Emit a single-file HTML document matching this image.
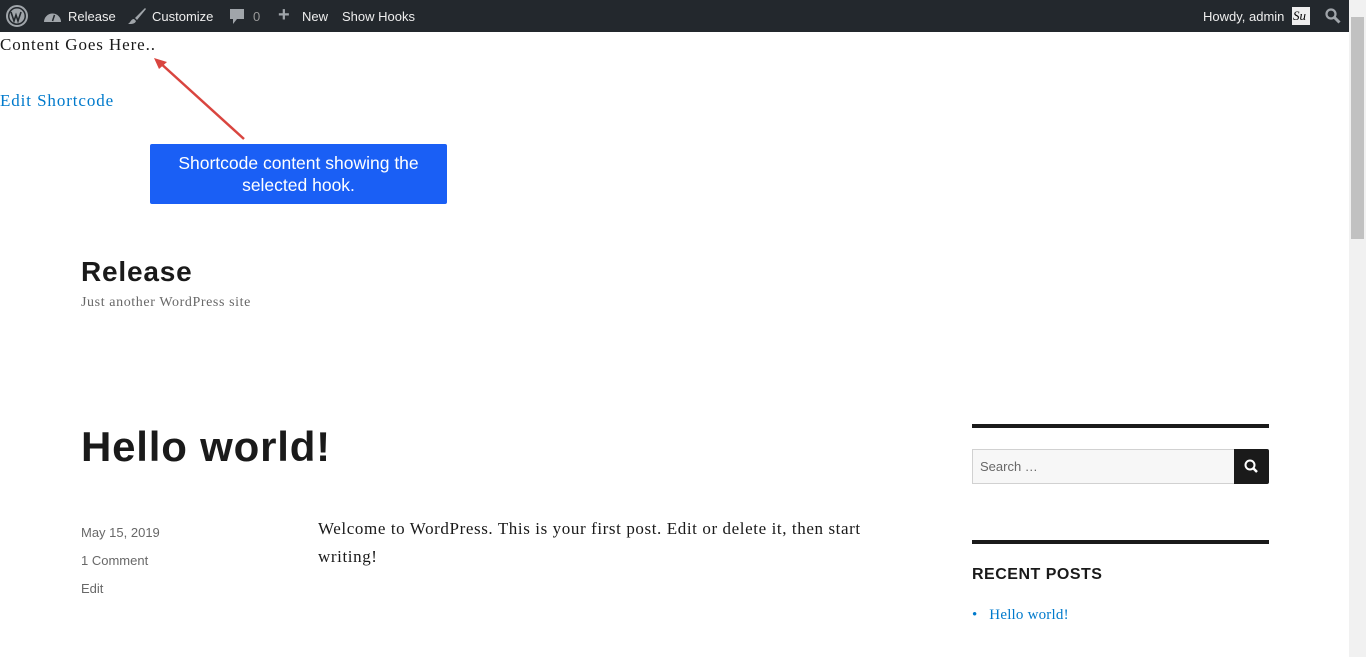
<!DOCTYPE html>
<html><head><meta charset="utf-8"><style>
*{margin:0;padding:0;box-sizing:border-box}
body{width:1366px;height:657px;overflow:hidden;background:#fff;position:relative;font-family:"Liberation Serif",serif}
#bar{position:absolute;left:0;top:0;width:1366px;height:32px;background:#23282d;color:#eee;font:13px "Liberation Sans",sans-serif}
#bar span{position:absolute;top:9px}
.a{position:absolute}
.sb{position:absolute;left:1349px;top:0;width:17px;height:657px;background:#f1f1f1}
.th{position:absolute;left:1351px;top:17px;width:13px;height:222px;background:#c1c1c1}
.m{font-family:"Liberation Sans",sans-serif}
.s{letter-spacing:.9px}
</style></head><body>
<div id="bar">
<svg class="a" style="left:6px;top:5px" width="22" height="22" viewBox="0 0 22 22"><circle cx="11" cy="11" r="10" fill="none" stroke="#a0a5aa" stroke-width="2"/><circle cx="11" cy="11" r="7.5" fill="#a0a5aa"/><path d="M5 7l3 9 2-6 2 6 3-9" stroke="#23282d" stroke-width="1.6" fill="none"/></svg>
<svg class="a" style="left:43px;top:8px" width="19" height="15" viewBox="0 0 19 15"><path d="M1 14a8.5 8.5 0 0117 0z" fill="#a0a5aa"/><path d="M9.5 13l2-6" stroke="#23282d" stroke-width="1.5"/></svg>
<span style="left:68px">Release</span>
<svg class="a" style="left:127px;top:7px" width="20" height="18" viewBox="0 0 20 18"><path d="M18 1L8 11l2 2L19 2zM7 12c-3 0-3 3-6 5 4 0 7 0 8-3z" fill="#a0a5aa"/></svg>
<span style="left:152px">Customize</span>
<svg class="a" style="left:229px;top:8px" width="16" height="18" viewBox="0 0 16 18"><path d="M1 1h14v10H8l-4 5v-5H1z" fill="#a0a5aa"/></svg>
<span style="left:253px;color:#999">0</span>
<span style="left:278px;top:4px;font-size:20px;color:#a0a5aa;font-weight:bold">+</span>
<span style="left:302px">New</span>
<span style="left:342px">Show Hooks</span>
<span style="left:1203px">Howdy, admin</span>
<div class="a" style="left:1292px;top:7px;width:18px;height:18px;background:#eee;color:#000;font:italic 13px 'Liberation Serif';padding-left:1px;line-height:18px">Su</div>
<svg class="a" style="left:1325px;top:8px" width="16" height="16" viewBox="0 0 16 16"><circle cx="6" cy="6" r="4.5" fill="none" stroke="#a0a5aa" stroke-width="2.2"/><path d="M9.5 9.5l5 5" stroke="#a0a5aa" stroke-width="3"/></svg>
</div>
<div class="sb"></div><div class="th"></div>
<div class="a s" style="left:0;top:35px;font-size:17px;color:#1a1a1a">Content Goes Here..</div>
<div class="a s" style="left:0;top:91px;font-size:17px;color:#007acc">Edit Shortcode</div>
<svg class="a" style="left:150px;top:55px" width="100" height="90"><path d="M94 84L8 6" stroke="#d9453f" stroke-width="2.5"/><path d="M4 3l13 4-8 7z" fill="#d9453f"/></svg>
<div class="a m" style="left:150px;top:144px;width:297px;height:60px;background:#1a5ff5;border-radius:2px;color:#fff;font-size:17.5px;text-align:center;line-height:22px;padding-top:8px">Shortcode content showing the<br>selected hook.</div>
<div class="a m" style="left:81px;top:256px;font-size:28px;font-weight:bold;color:#1a1a1a;letter-spacing:.8px">Release</div>
<div class="a s" style="left:81px;top:295px;font-size:14px;color:#686868;letter-spacing:.6px">Just another WordPress site</div>
<div class="a m" style="left:81px;top:423px;font-size:42px;font-weight:bold;color:#1a1a1a;letter-spacing:.8px">Hello world!</div>
<div class="a m" style="left:81px;top:519px;font-size:13px;color:#686868;line-height:28px">May 15, 2019<br>1 Comment<br>Edit</div>
<div class="a s" style="left:318px;top:515px;font-size:17px;color:#1a1a1a;line-height:28px;width:590px;letter-spacing:.6px">Welcome to WordPress. This is your first post. Edit or delete it, then start writing!</div>
<div class="a" style="left:972px;top:424px;width:297px;height:4px;background:#1a1a1a"></div>
<div class="a m" style="left:972px;top:449px;width:263px;height:35px;border:1px solid #d1d1d1;background:#f7f7f7;font-size:13px;color:#686868;padding:9px 7px">Search …</div>
<div class="a" style="left:1234px;top:449px;width:35px;height:35px;background:#1a1a1a;border-radius:0 2px 2px 0"><svg width="35" height="35"><circle cx="16" cy="16" r="4.5" fill="none" stroke="#fff" stroke-width="2"/><path d="M19 19l4 4" stroke="#fff" stroke-width="2.5"/></svg></div>
<div class="a" style="left:972px;top:540px;width:297px;height:4px;background:#1a1a1a"></div>
<div class="a m" style="left:972px;top:566px;font-size:16px;font-weight:bold;color:#1a1a1a;letter-spacing:.5px">RECENT POSTS</div>
<div class="a" style="left:972px;top:607px;font-size:15px;color:#007acc;letter-spacing:.2px">•&nbsp; &nbsp;Hello world!</div>
</body></html>
